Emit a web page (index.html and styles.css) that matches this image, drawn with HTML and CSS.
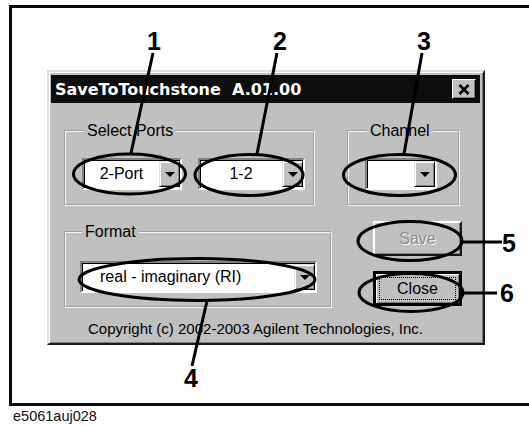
FILE: index.html
```html
<!DOCTYPE html>
<html>
	<head>
		<meta charset="utf-8">
		<title>SaveToTouchstone</title>
		<link rel="stylesheet" href="styles.css">
	</head>
	<body>
		<!-- 外框 -->
		<div class="figure">
			<!-- 对话框 -->
			<div class="dialog">
				<div class="titlebar">
					<span class="title">SaveToTouchstone&nbsp; A.01.00</span>
					<span class="close-x">
						<svg width="12" height="11" viewBox="0 0 12 11">
							<path d="M1.5 1 L10.5 10 M10.5 1 L1.5 10" stroke="#000" stroke-width="2.6" fill="none"/>
						</svg>
					</span>
				</div>
				<div class="dialog-body">
					<!-- 第一行:端口和通道 -->
					<div class="row row1">
						<fieldset class="group ports">
							<legend>Select Ports</legend>
							<div class="combo c-port"><span class="field">2-Port</span><span class="drop"></span></div>
							<div class="combo c-pair"><span class="field">1-2</span><span class="drop"></span></div>
						</fieldset>
						<fieldset class="group channel">
							<legend>Channel</legend>
							<div class="combo c-ch"><span class="field"></span><span class="drop"></span></div>
						</fieldset>
					</div>
					<!-- 第二行:格式和按钮 -->
					<div class="row row2">
						<fieldset class="group format">
							<legend>Format</legend>
							<div class="combo c-format"><span class="field left">real - imaginary (RI)</span><span class="drop"></span></div>
						</fieldset>
						<div class="buttons">
							<div class="btn disabled">Save</div>
							<div class="btn default"><span class="focus">Close</span></div>
						</div>
					</div>
					<p class="copyright">Copyright (c) 2002-2003 Agilent Technologies, Inc.</p>
				</div>
			</div>
		</div>
		<p class="caption">e5061auj028</p>

		<!-- 标注:椭圆,引线,编号 -->
		<svg class="marks" width="529" height="426" viewBox="0 0 529 426">
			<g fill="none" stroke="#000" stroke-width="3">
				<ellipse cx="129.5" cy="174" rx="56" ry="20"/>
				<ellipse cx="249" cy="175" rx="54" ry="20.5"/>
				<ellipse cx="399.5" cy="175" rx="56" ry="20.5"/>
				<ellipse cx="197" cy="279.5" rx="118" ry="21"/>
				<ellipse cx="410" cy="241" rx="52" ry="19.5"/>
				<ellipse cx="411" cy="292.5" rx="52" ry="19"/>
				<path d="M153 53 L131 153"/>
				<path d="M277 53 L257 154"/>
				<path d="M422 53 L404 154"/>
				<path d="M207 301 L192 366"/>
				<path d="M462 242 L502 242"/>
				<path d="M463 293 L497 293"/>
			</g>
			<g class="num">
				<text x="154" y="50">1</text>
				<text x="280" y="50">2</text>
				<text x="424" y="50">3</text>
				<text x="191" y="387">4</text>
				<text x="509" y="252">5</text>
				<text x="507" y="302">6</text>
			</g>
		</svg>
	</body>
</html>
```

FILE: styles.css
```css
*{
	box-sizing: border-box;
}
body{
	margin: 0;
	position: relative;
	width: 529px;height: 426px;
	overflow: hidden;
	background-color: #fff;
	font-family: "Liberation Sans", Arial, sans-serif;
}

/* 黑色外框,右边超出画面 */
.figure{
	margin: 5px 0 0 9px;
	height: 401px;
	border: 3px solid #0a0a0a;
	border-right: 0;
}

/* 对话框 */
.dialog{
	margin: 62px 0 0 35px;
	width: 438px;height: 275px;
	background-color: #c0c0c0;
	border: 2px solid;
	border-color: #dfdfdf #1a1a1a #1a1a1a #dfdfdf;
	box-shadow: inset 1px 1px #fff, inset -1px -1px #808080;
	padding: 3px 3px 2px 2px;
}
.titlebar{
	height: 28px;
	background-color: #0e0e0e;
	display: flex;
	align-items: center;
	justify-content: space-between;
	padding: 0 4px 0 4px;
}
.title{
	color: #fff;
	font-family: "DejaVu Sans", Verdana, sans-serif;
	font-weight: bold;
	font-size: 16px;
}
.close-x{
	width: 24px;height: 20px;
	background-color: #c0c0c0;
	border: 1px solid;
	border-color: #fff #000 #000 #fff;
	box-shadow: inset -1px -1px #808080;
	display: flex;
	align-items: center;
	justify-content: center;
}
.close-x svg{
	display: block;
}

/* 内容区 */
.dialog-body{
	padding: 0 0 0 13px;
	font-size: 16px;
	color: #000;
}
.row{
	display: flex;
	align-items: flex-start;
}
.row1{
	margin-top: 19px;
	gap: 32px;
}
.row2{
	margin-top: 15px;
}

/* 分组框 */
.group{
	margin: 0;
	min-width: 0;
	border: 2px groove #f4f4f4;
	padding: 19px 0 14px 16px;
}
.group legend{
	padding: 0 3px;
	margin-left: 2px;
	line-height: 17px;
}
.ports{
	width: 251px;
	display: flex;
	gap: 16px;
}
.channel{
	width: 113px;
}
.format{
	width: 268px;
	margin-top: 2px;
	padding: 21px 0 13px 14px;
}

/* 下拉框 */
.combo{
	display: flex;
	height: 32px;
	background-color: #fff;
	border: 2px solid;
	border-color: #808080 #fff #fff #808080;
	box-shadow: inset 1px 1px #000;
}
.c-port{ width: 100px; }
.c-pair{ width: 107px; }
.c-ch{ width: 72px; }
.c-format{ width: 237px; }
.field{
	flex: 1;
	line-height: 28px;
	text-align: center;
	white-space: nowrap;
}
.field.left{
	text-align: left;
	padding-left: 18px;
}
.drop{
	width: 21px;
	margin: 1px 0 1px 0;
	background-color: #c0c0c0;
	border: 1px solid;
	border-color: #dfdfdf #000 #000 #dfdfdf;
	box-shadow: inset 1px 1px #fff, inset -1px -1px #808080;
	display: flex;
	align-items: center;
	justify-content: center;
}
.drop::after{
	content: "";
	border-top: 5px solid #000;
	border-left: 5px solid transparent;
	border-right: 5px solid transparent;
}

/* 按钮 */
.buttons{
	margin-left: 41px;
	width: 89px;
	display: flex;
	flex-direction: column;
	gap: 15px;
}
.btn{
	height: 35px;
	display: flex;
	align-items: center;
	justify-content: center;
	border: 2px solid;
	border-color: #fff #1a1a1a #1a1a1a #fff;
	box-shadow: inset -1px -1px #808080;
}
.btn.disabled{
	color: #8a8a8a;
	text-shadow: 1px 1px #fff;
}
.btn.default{
	border: 3px solid;
	border-color: #000;
	box-shadow: inset 1px 1px #fff, inset -1px -1px #808080;
}
.focus{
	align-self: stretch;
	flex: 1;
	margin: 3px;
	border: 1px dotted #000;
	display: flex;
	align-items: center;
	justify-content: center;
}

.copyright{
	margin: 12px 0 0 24px;
	font-size: 15px;
	line-height: 17px;
}

/* 图号 */
.caption{
	margin: 2px 0 0 13px;
	font-size: 14.5px;
	line-height: 16px;
	color: #111;
}

/* 标注层盖在上面 */
.marks{
	position: absolute;
	top: 0;left: 0;
	pointer-events: none;
}
.num text{
	font-family: "Liberation Sans Narrow", "Liberation Sans", Arial, sans-serif;
	font-weight: bold;
	font-size: 25px;
	text-anchor: middle;
	fill: #000;
}
```
